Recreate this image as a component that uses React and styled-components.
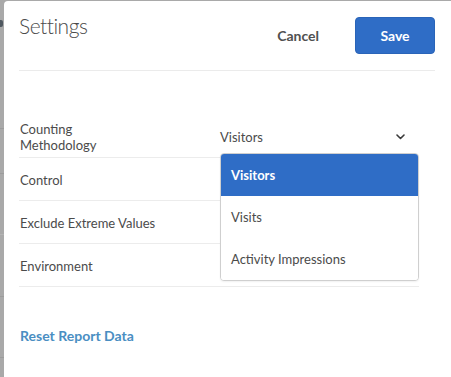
import React from "react";
import styled, { createGlobalStyle } from "styled-components";

const Global = createGlobalStyle`
  html, body { margin: 0; padding: 0; height: 100%; }
  body {
    background: #a9a9a9;
    font-family: Lato, "Noto Sans", "Liberation Sans", sans-serif;
    color: #4b4b4b;
    overflow: hidden;
  }
  #root { height: 100%; }
`;

const Page = styled.div`
  position: relative;
  height: 100%;
  box-sizing: border-box;
  padding: 1px 0 0 4px;
  background-image:
    linear-gradient(#9c9c9c, #9c9c9c),
    linear-gradient(#9c9c9c, #9c9c9c),
    linear-gradient(#b4b4b4, #b4b4b4),
    linear-gradient(#9c9c9c, #9c9c9c),
    linear-gradient(#9c9c9c, #9c9c9c);
  background-size: 4px 1px;
  background-repeat: no-repeat;
  background-position: 0 128px, 0 173px, 0 234px, 0 296px, 0 357px;
`;

const GearHint = styled.span`
  position: absolute;
  left: 0;
  top: 20px;
  width: 3px;
  height: 7px;
  background: #4f5860;
  border-radius: 0 2px 2px 0;
`;

const Modal = styled.div`
  height: 100%;
  box-sizing: border-box;
  background: #fff;
  border-radius: 4px 0 0 0;
  padding: 0 16px 0 15px;
`;

const Header = styled.div`
  display: flex;
  align-items: flex-start;
  justify-content: space-between;
  padding: 16px 0 16px;
  border-bottom: 1px solid #ebebeb;
`;

const Title = styled.h1`
  margin: -4px 0 0;
  font-size: 21px;
  font-weight: 300;
  line-height: 26px;
  letter-spacing: -0.5px;
  color: #4b4b4b;
`;

const Actions = styled.div`
  display: flex;
  align-items: center;
  gap: 17px;
`;

const Button = styled.button`
  height: 37px;
  border-radius: 4px;
  border: none;
  font-family: inherit;
  font-size: 14px;
  font-weight: 700;
  cursor: pointer;
  padding: 0 ${(p) => (p.$primary ? "0" : "18px")};
  width: ${(p) => (p.$primary ? "80px" : "auto")};
  background: ${(p) => (p.$primary ? "#2f6dc6" : "transparent")};
  color: ${(p) => (p.$primary ? "#fff" : "#505050")};
  border: 1px solid ${(p) => (p.$primary ? "#2a64b8" : "transparent")};
`;

const Rows = styled.div`
  width: 400px;
  margin-top: 44px;
`;

const Row = styled.div`
  position: relative;
  display: grid;
  grid-template-columns: 201px 1fr;
  align-items: center;
  height: 42px;
  border-bottom: 1px solid #ececec;
  font-size: 13px;
`;

const Label = styled.div`
  padding-left: 1px;
  line-height: 16px;
  max-width: ${(p) => p.$max || "none"};
  padding-top: ${(p) => (p.$max ? "2px" : "1px")};
`;

const Select = styled.div`
  display: flex;
  align-items: center;
  justify-content: space-between;
  padding-right: 14px;
  padding-top: 2px;
`;

const Menu = styled.ul`
  position: absolute;
  left: 201px;
  top: 38px;
  width: 199px;
  box-sizing: border-box;
  margin: 0;
  padding: 0;
  list-style: none;
  background: #fff;
  border: 1px solid #cfcfcf;
  border-radius: 4px;
  overflow: hidden;
  z-index: 2;
  box-shadow: 0 1px 2px rgba(0, 0, 0, 0.06);
`;

const Option = styled.li`
  height: 42px;
  display: flex;
  align-items: center;
  padding: 0 10px;
  font-size: 13px;
  background: ${(p) => (p.$selected ? "#2f6dc6" : "#fff")};
  color: ${(p) => (p.$selected ? "#fff" : "#4b4b4b")};
  font-weight: ${(p) => (p.$selected ? 700 : 400)};
`;

const ResetLink = styled.a`
  display: inline-block;
  margin-top: 40px;
  margin-left: 1px;
  font-size: 14px;
  font-weight: 700;
  color: #4a8ec2;
  text-decoration: none;
  cursor: pointer;
`;

const Chevron = () => (
  <svg width="9" height="6" viewBox="0 0 9 6" fill="none">
    <path d="M1 1l3.5 3.5L8 1" stroke="#3a3a3a" strokeWidth="1.6" strokeLinecap="round" strokeLinejoin="round" />
  </svg>
);

export default function App() {
  return (
    <>
      <Global />
      <Page>
        <GearHint />
        <Modal>
          <Header>
            <Title>Settings</Title>
            <Actions>
              <Button>Cancel</Button>
              <Button $primary>Save</Button>
            </Actions>
          </Header>
          <Rows>
            <Row>
              <Label $max="110px">Counting Methodology</Label>
              <Select>
                <span>Visitors</span>
                <Chevron />
              </Select>
              <Menu>
                <Option $selected>Visitors</Option>
                <Option>Visits</Option>
                <Option>Activity Impressions</Option>
              </Menu>
            </Row>
            <Row>
              <Label>Control</Label>
            </Row>
            <Row>
              <Label>Exclude Extreme Values</Label>
            </Row>
            <Row>
              <Label>Environment</Label>
            </Row>
          </Rows>
          <ResetLink>Reset Report Data</ResetLink>
        </Modal>
      </Page>
    </>
  );
}
